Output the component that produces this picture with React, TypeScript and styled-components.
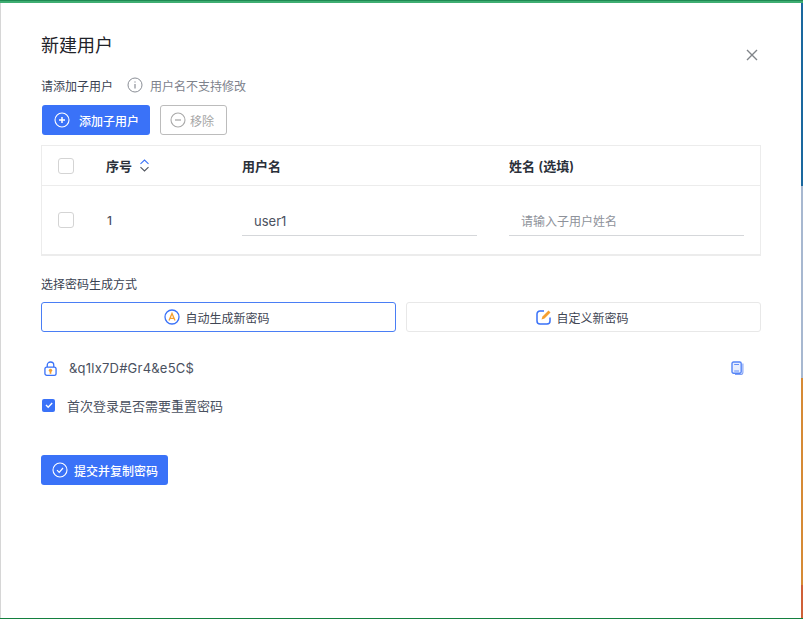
import React from 'react'
import styled, { createGlobalStyle } from 'styled-components'

const Global = createGlobalStyle`
  html, body {
    margin: 0;
    padding: 0;
    height: 100%;
    overflow: hidden;
    background: #fff;
  }
  * {
    box-sizing: border-box;
  }
  body {
    font-family: 'Inter', 'Noto Sans CJK SC', sans-serif;
    color: #3a4252;
  }
`

const Screen = styled.div`
  width: 803px;
  height: 619px;
  display: flex;
  flex-direction: column;
`

const TopEdge = styled.div`
  height: 3px;
  flex: none;
  background: linear-gradient(#1f8a53 0, #1f8a53 1px, #3fae72 1px);
`

const BottomEdge = styled.div`
  height: 1px;
  flex: none;
  background: #14803f;
`

const Middle = styled.div`
  flex: 1;
  min-height: 0;
  display: flex;
`

const LeftEdge = styled.div`
  width: 1px;
  flex: none;
  background: #d6d6d6;
`

const RightEdge = styled.div`
  width: 2px;
  flex: none;
  display: flex;
  flex-direction: column;
`

const EdgeSegment = styled.div<{ $h: number; $c: string }>`
  height: ${p => p.$h}px;
  flex: none;
  background: ${p => p.$c};
`

const Dialog = styled.div`
  position: relative;
  flex: 1;
  min-width: 0;
  padding: 31px 40px 0 40px;
  background: #fff;
`

const Title = styled.h1`
  margin: 0;
  height: 24px;
  font-size: 18px;
  line-height: 24px;
  font-weight: 400;
  color: #1f2329;
`

const CloseButton = styled.button`
  position: absolute;
  top: 45px;
  right: 42px;
  width: 14px;
  height: 14px;
  padding: 0;
  border: 0;
  background: none;
  display: flex;
  color: #808489;
`

const HintRow = styled.div`
  display: flex;
  align-items: center;
  height: 20px;
  margin-top: 17px;
  font-size: 12px;
`

const FieldLabel = styled.span`
  color: #3a4252;
`

const HintText = styled.span`
  margin-left: 7px;
  color: #7d828c;
`

const InfoIcon = styled.span`
  display: flex;
  margin-left: 14px;
  color: #8a8e96;
`

const ToolRow = styled.div`
  display: flex;
  gap: 10px;
  margin-top: 10px;
  margin-left: 1px;
`

const PrimaryButton = styled.button<{ $w: number; $gap: number; $pad: number }>`
  display: flex;
  align-items: center;
  gap: ${p => p.$gap}px;
  width: ${p => p.$w}px;
  height: 30px;
  padding: 0 0 0 ${p => p.$pad}px;
  border: 0;
  border-radius: 3px;
  background: #3a72f8;
  color: #fff;
  font-family: inherit;
  font-size: 12px;
  font-weight: 500;
`

const GhostButton = styled.button`
  display: flex;
  align-items: center;
  gap: 4px;
  width: 67px;
  height: 30px;
  padding: 0 0 0 9px;
  border: 1px solid #bcbcbc;
  border-radius: 3px;
  background: #fff;
  color: #a6a6a6;
  font-family: inherit;
  font-size: 12px;
`

const TableBox = styled.div`
  margin-top: 10px;
  width: 720px;
  height: 111px;
  border: 1px solid #ececec;
  border-bottom-width: 2px;
`

const Row = styled.div<{ $h: number; $head?: boolean }>`
  display: grid;
  grid-template-columns: 64px 136px 267px 1fr;
  align-items: center;
  height: ${p => p.$h}px;
  font-size: ${p => (p.$head ? 13 : 12)}px;
  font-weight: ${p => (p.$head ? 600 : 500)};
  color: ${p => (p.$head ? '#2b303a' : '#4a5160')};
  border-bottom: ${p => (p.$head ? '1px solid #ececec' : '0')};
`

const CheckCell = styled.div`
  padding-left: 16px;
  display: flex;
`

const CheckBox = styled.span`
  width: 16px;
  height: 16px;
  border: 1px solid #d4d4d4;
  border-radius: 3px;
  background: #fff;
`

const IndexCell = styled.div`
  padding-left: 1px;
`

const SortCell = styled.div`
  display: flex;
  align-items: center;
  gap: 7px;
`

const TextField = styled.input`
  display: block;
  width: 235px;
  height: 30px;
  margin-top: 2px;
  padding: 0 0 0 12px;
  border: 0;
  border-bottom: 1px solid #d5d7da;
  outline: none;
  background: none;
  font-family: inherit;
  font-size: 13px;
  color: #4a5160;

  &::placeholder {
    font-size: 12px;
    color: #8e929a;
  }
`

const SectionLabel = styled.div`
  height: 20px;
  margin-top: 19px;
  font-size: 12px;
  line-height: 20px;
  color: #3a4252;
`

const OptionRow = styled.div`
  display: grid;
  grid-template-columns: 355px 355px;
  gap: 10px;
  margin-top: 7px;
  width: 720px;
`

const OptionButton = styled.button<{ $active?: boolean; $gap: number; $shift: number }>`
  display: flex;
  align-items: center;
  justify-content: center;
  gap: ${p => p.$gap}px;
  height: 30px;
  padding: 0 ${p => p.$shift}px 0 0;
  border: 1px solid ${p => (p.$active ? '#4a7ef5' : '#e8e8e8')};
  border-radius: 3px;
  background: #fff;
  color: #3f4654;
  font-family: inherit;
  font-size: 12px;
`

const PasswordRow = styled.div`
  display: flex;
  align-items: center;
  height: 20px;
  margin-top: 26px;
  padding-left: 3px;
  width: 703px;
  font-size: 13px;
  color: #4a5160;
`

const PasswordText = styled.span`
  margin-left: 12px;
  flex: 1;
  letter-spacing: 0.22px;
`

const ResetRow = styled.label`
  display: flex;
  align-items: center;
  gap: 12px;
  height: 20px;
  margin-top: 17px;
  padding-left: 1px;
  font-size: 13px;
  color: #4a5160;
`

const CheckedBox = styled.span`
  width: 13px;
  height: 13px;
  border-radius: 2px;
  background: #3a72f8;
  display: flex;
  align-items: center;
  justify-content: center;
`

const SubmitWrap = styled.div`
  margin-top: 40px;
`

const PlusCircle = () => (
  <svg width="16" height="16" viewBox="0 0 16 16" fill="none" stroke="#fff">
    <circle cx="8" cy="8" r="7" strokeWidth="1.1" />
    <path d="M5 8h6M8 5v6" strokeWidth="1.5" />
  </svg>
)

const MinusCircle = () => (
  <svg width="16" height="16" viewBox="0 0 16 16" fill="none" stroke="#a9a9a9">
    <circle cx="8" cy="8" r="7" strokeWidth="1.1" />
    <path d="M5 8h6" strokeWidth="1.3" />
  </svg>
)

const SortIcon = () => (
  <svg width="11" height="13" viewBox="0 0 11 13" fill="none" strokeWidth="1.1">
    <path d="M1.5 4.8L5.5 1l4 3.8" stroke="#3a72f8" />
    <path d="M1.5 8.2L5.5 12l4-3.8" stroke="#50555e" />
  </svg>
)

const AutoIcon = () => (
  <svg width="16" height="16" viewBox="0 0 16 16" fill="none">
    <circle cx="8" cy="8" r="7" stroke="#3a72f8" strokeWidth="1.3" />
    <path d="M5 11.5L8 4.5l3 7M6 9.3h4" stroke="#f5a030" strokeWidth="1.3" />
  </svg>
)

const EditIcon = () => (
  <svg width="16" height="16" viewBox="0 0 16 16" fill="none">
    <path d="M8 2H4a3 3 0 0 0-3 3v7a3 3 0 0 0 3 3h7a3 3 0 0 0 3-3V8.5" stroke="#3a72f8" strokeWidth="1.5" />
    <path d="M5.5 10.5l1-3L12.5 1.5l2 2-6 6z" fill="#f5a030" />
  </svg>
)

const LockIcon = () => (
  <svg width="13" height="15" viewBox="0 0 14 16" fill="none">
    <path d="M3.5 6.5V4.2a3.5 3.2 0 0 1 7 0v2.3" stroke="#3a72f8" strokeWidth="1.4" />
    <rect x="1" y="6.5" width="12" height="8.8" rx="2" stroke="#3a72f8" strokeWidth="1.4" />
    <circle cx="7" cy="10" r="1.8" fill="#f5a030" />
    <path d="M6.1 10.5h1.8v3.2H6.1z" fill="#f5a030" />
  </svg>
)

const CopyIcon = () => (
  <svg width="13" height="14" viewBox="0 0 13 14" fill="none">
    <path d="M11.9 2.5v9a2 2 0 0 1-2 2H4" stroke="#7f9ff5" strokeWidth="1.1" />
    <rect x="1" y="1" width="9.2" height="11.3" rx="1.5" fill="#e8eefe" stroke="#5585f7" strokeWidth="1.4" />
    <path d="M3.2 3.5h4.8" stroke="#5585f7" strokeWidth="0.9" />
    <path d="M3.2 10h4.8" stroke="#5585f7" strokeWidth="0.9" />
  </svg>
)

const CheckCircle = () => (
  <svg width="16" height="16" viewBox="0 0 16 16" fill="none" stroke="#fff" strokeWidth="1.1">
    <circle cx="8" cy="8" r="7" />
    <path d="M5 8.2l2.2 2.2L11 6" strokeWidth="1.2" />
  </svg>
)

export default function App() {
  return (
    <Screen>
      <Global />
      <TopEdge />
      <Middle>
        <LeftEdge />
        <Dialog>
          <Title>新建用户</Title>
          <CloseButton aria-label="关闭">
            <svg width="14" height="14" viewBox="0 0 14 14" fill="none" stroke="currentColor" strokeWidth="1.4">
              <path d="M2 2l10 10M12 2L2 12" />
            </svg>
          </CloseButton>

          <HintRow>
            <FieldLabel>请添加子用户</FieldLabel>
            <InfoIcon>
              <svg width="16" height="16" viewBox="0 0 16 16" fill="none" stroke="currentColor">
                <circle cx="8" cy="8" r="7" strokeWidth="1" />
                <path d="M8 7v4.5" strokeWidth="1.2" />
                <path d="M8 4.4v1.2" strokeWidth="1.3" />
              </svg>
            </InfoIcon>
            <HintText>用户名不支持修改</HintText>
          </HintRow>

          <ToolRow>
            <PrimaryButton $w={108} $gap={9} $pad={12}>
              <PlusCircle />
              添加子用户
            </PrimaryButton>
            <GhostButton>
              <MinusCircle />
              移除
            </GhostButton>
          </ToolRow>

          <TableBox>
            <Row $h={40} $head>
              <CheckCell><CheckBox /></CheckCell>
              <SortCell>序号 <SortIcon /></SortCell>
              <div>用户名</div>
              <div>姓名 (选填)</div>
            </Row>
            <Row $h={68}>
              <CheckCell><CheckBox /></CheckCell>
              <IndexCell>1</IndexCell>
              <TextField defaultValue="user1" />
              <TextField placeholder="请输入子用户姓名" />
            </Row>
          </TableBox>

          <SectionLabel>选择密码生成方式</SectionLabel>
          <OptionRow>
            <OptionButton $active $gap={5} $shift={3}>
              <AutoIcon />
              自动生成新密码
            </OptionButton>
            <OptionButton $gap={4} $shift={2}>
              <EditIcon />
              自定义新密码
            </OptionButton>
          </OptionRow>

          <PasswordRow>
            <LockIcon />
            <PasswordText>&amp;q1lx7D#Gr4&amp;e5C$</PasswordText>
            <CopyIcon />
          </PasswordRow>

          <ResetRow>
            <CheckedBox>
              <svg width="10" height="10" viewBox="0 0 10 10" fill="none" stroke="#fff" strokeWidth="1.4">
                <path d="M2 5l2.2 2.2L8.2 3" />
              </svg>
            </CheckedBox>
            首次登录是否需要重置密码
          </ResetRow>

          <SubmitWrap>
            <PrimaryButton $w={127} $gap={6} $pad={11}>
              <CheckCircle />
              提交并复制密码
            </PrimaryButton>
          </SubmitWrap>
        </Dialog>
        <RightEdge>
          <EdgeSegment $h={183} $c="#1a689f" />
          <EdgeSegment $h={192} $c="#a7b8d0" />
          <EdgeSegment $h={207} $c="#d68a35" />
          <EdgeSegment $h={33} $c="#cf6038" />
        </RightEdge>
      </Middle>
      <BottomEdge />
    </Screen>
  )
}
